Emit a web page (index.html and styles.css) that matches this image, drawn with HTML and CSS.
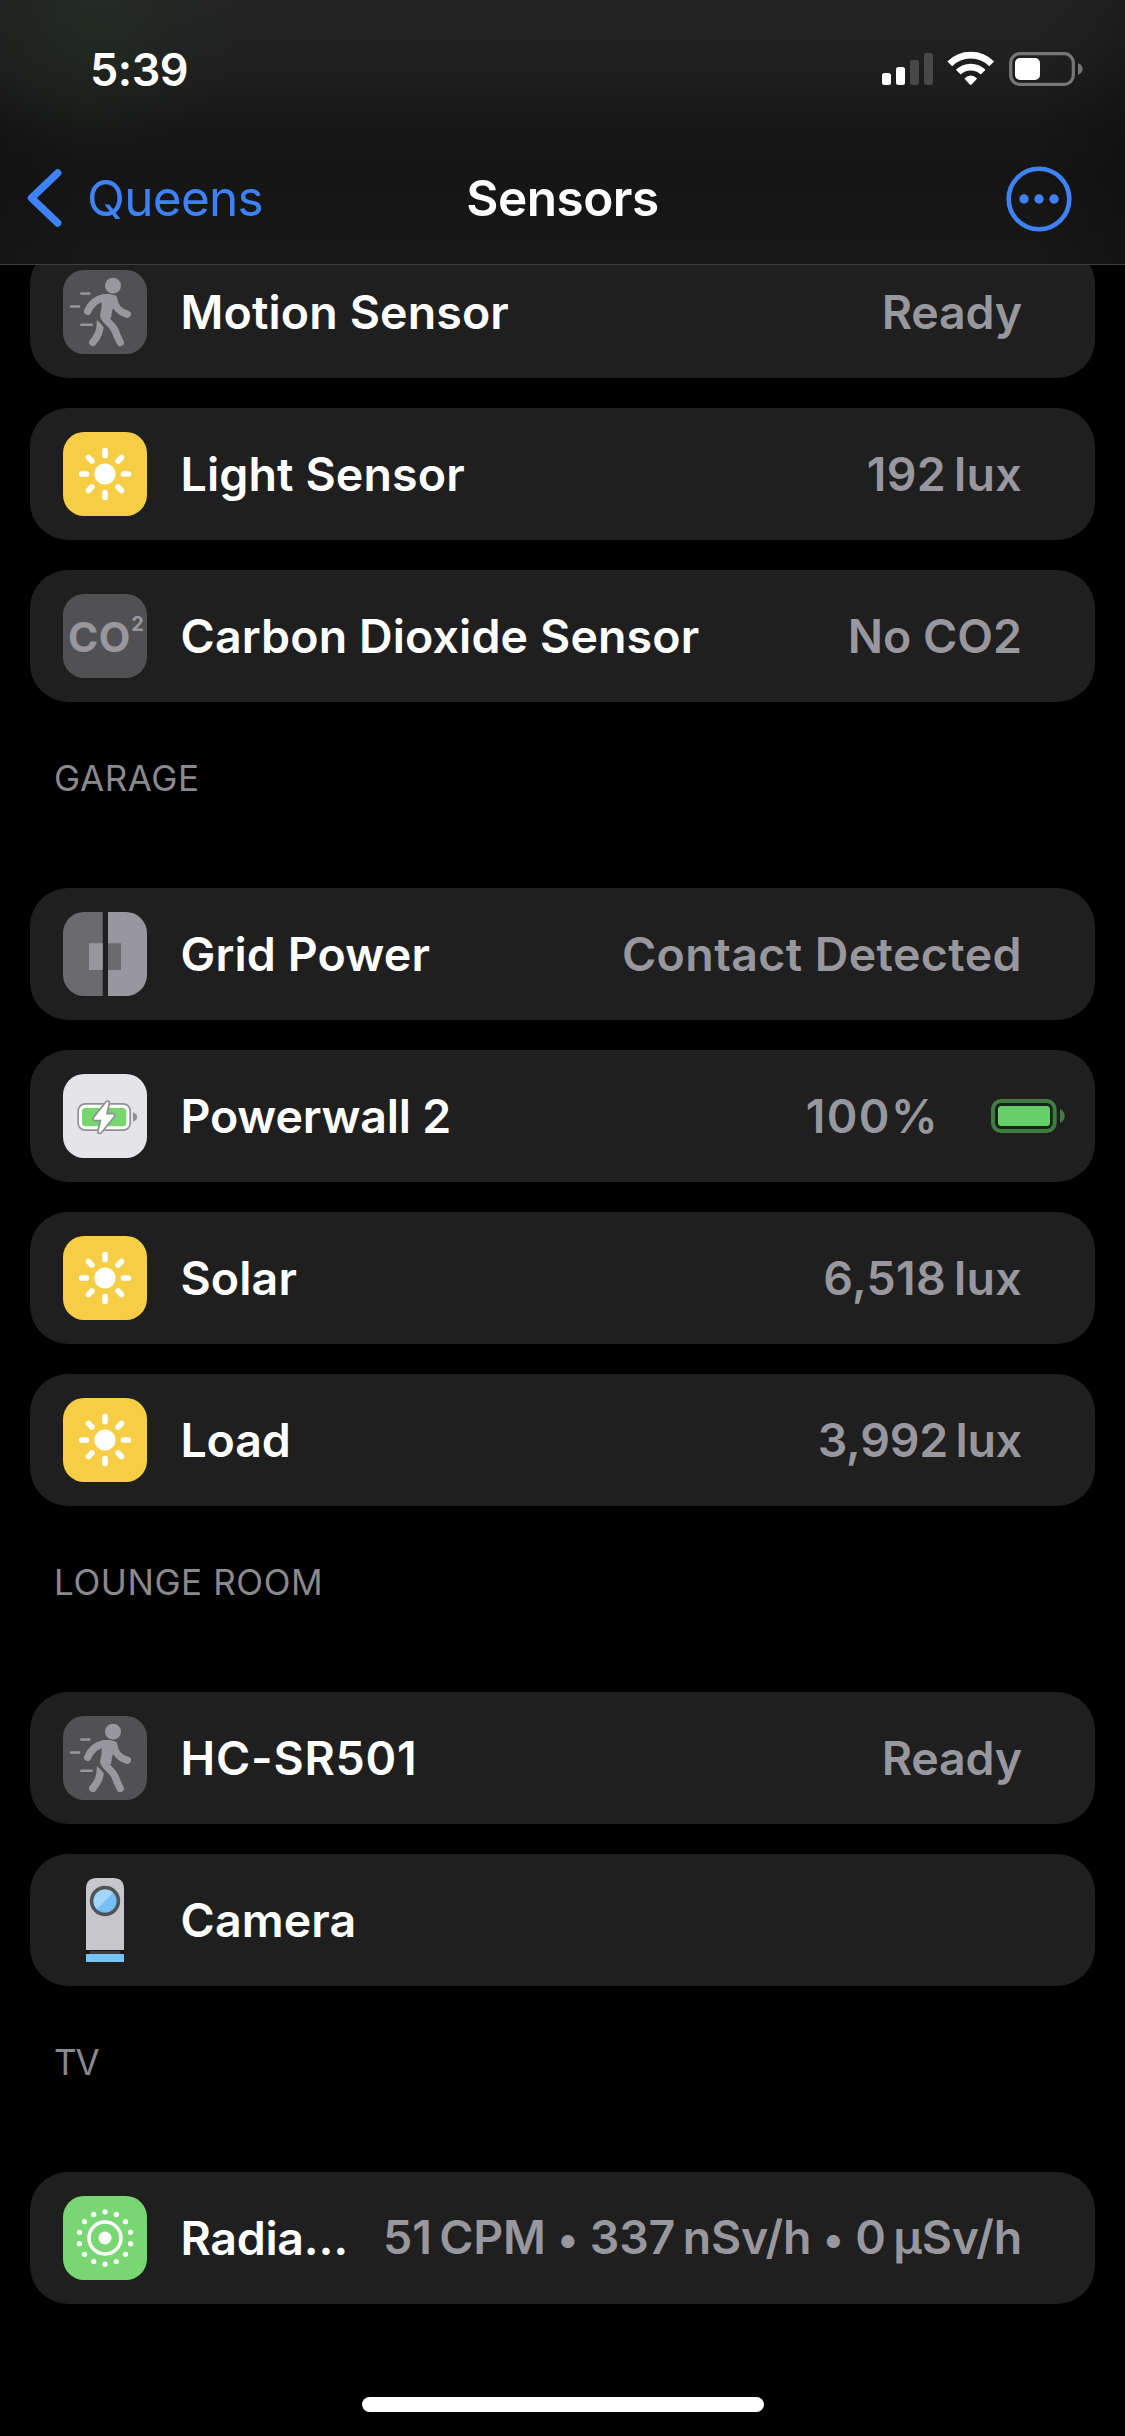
FILE: index.html
```
<!DOCTYPE html>
<html lang="en">
<head>
<meta charset="utf-8">
<title>Sensors</title>
<link rel="stylesheet" href="styles.css">
</head>
<body>
<svg class="defs" aria-hidden="true">
  <symbol id="sun" viewBox="0 0 84 84">
    <circle cx="42" cy="42" r="10.6" fill="#fff"/>
    <g stroke="#fff" stroke-width="5.7" stroke-linecap="round">
      <path d="M42 18.7v4.7M42 60.6v4.7M18.7 42h4.7M60.6 42h4.7M25.5 25.5l3.4 3.4M55.1 55.1l3.4 3.4M25.5 58.5l3.4-3.4M55.1 28.9l3.4-3.4"/>
    </g>
  </symbol>
  <symbol id="walk" viewBox="0 0 84 84">
    <path d="M37.4 52C37.500 62 34.500 66.500 29.800 72.400" fill="none" stroke="#98979d" stroke-width="7.400" stroke-linecap="round"/>
    <path d="M35 45L41 50.500L48 58.500L52 70" fill="none" stroke="#515053" stroke-width="9"/>
    <g fill="none" stroke="#98979d" stroke-width="7.400" stroke-linecap="round" stroke-linejoin="round">
      <path d="M24.700 41.300C28 33.500 32.500 29.300 40.500 28"/>
      <path d="M50.700 29C52 37 55.500 41.500 64.300 44.200"/>
      <path d="M41 46.500C43 51.500 49 54 52 60.500Q54 66 57.200 72.400"/>
    </g>
    <path d="M36 25.700C41 23.500 47 23.500 51 25.200Q54.500 27.500 53.900 32.500L50.500 36.500Q48.500 42 48.100 48L40.500 50.500Q36.500 48 37.400 43Q39 38 38.700 31Z" fill="#98979d"/>
    <circle cx="50" cy="15.700" r="8" fill="#98979d"/>
    <path d="M18.300 23.400h8M8 36.400h8M18.300 54.800h10.500" stroke="#98979d" stroke-width="2.500" stroke-linecap="round"/>
  </symbol>
</svg>

<header class="header">
  <div class="status">
    <span class="time">5:39</span>
    <svg class="status-icons" width="202" height="36" viewBox="0 0 202 36">
      <rect x="0" y="22" width="9" height="12" rx="2.500" fill="#fff"/>
      <rect x="14" y="16" width="9" height="18" rx="2.500" fill="#fff"/>
      <rect x="28" y="9" width="9" height="25" rx="2.500" fill="#484848"/>
      <rect x="42" y="2" width="9" height="32" rx="2.500" fill="#484848"/>
      <g fill="none" stroke="#fff" stroke-width="6.800">
        <path d="M67.800 12.800A29.500 29.500 0 0 1 109.700 12.800"/>
        <path d="M76.300 21.200A17.700 17.700 0 0 1 101.200 21.200"/>
      </g>
      <path d="M82.400 27.400Q88.750 21.800 95.100 27.400L89.700 33.400Q88.750 34.200 87.800 33.400Z" fill="#fff"/>
      <rect x="128.700" y="2.700" width="62.600" height="30.600" rx="9" fill="none" stroke="#767676" stroke-width="3.200"/>
      <rect x="133" y="7" width="25" height="22" rx="5" fill="#fff"/>
      <path d="M196 12.200C199.300 13.500 200.600 15.500 200.600 18S199.300 22.500 196 23.800Z" fill="#767676"/>
    </svg>
  </div>
  <nav class="nav">
    <a class="back">
      <svg width="36" height="60" viewBox="0 0 36 60"><path d="M30.700 5L4.500 30L30.700 55" fill="none" stroke="#3f82f6" stroke-width="7.400" stroke-linecap="round" stroke-linejoin="round"/></svg>
      <span>Queens</span>
    </a>
    <h1 class="heading">Sensors</h1>
    <svg class="more" width="66" height="66" viewBox="0 0 66 66">
      <circle cx="33" cy="33" r="30.300" fill="none" stroke="#3f82f6" stroke-width="4.600"/>
      <g fill="#3f82f6"><circle cx="18" cy="33" r="4.700"/><circle cx="33" cy="33" r="4.700"/><circle cx="48" cy="33" r="4.700"/></g>
    </svg>
  </nav>
</header>

<main>
  <section class="list first">
    <div class="card"><svg class="icon grey"><use href="#walk"/></svg><span class="name">Motion Sensor</span><span class="value tight">Ready</span></div>
    <div class="card"><svg class="icon yellow"><use href="#sun"/></svg><span class="name">Light Sensor</span><span class="value loose">192&#8201;lux</span></div>
    <div class="card">
      <svg class="icon grey" viewBox="0 0 84 84"><text class="co" x="4.900" y="58">CO</text><text class="sup" x="68.300" y="37">2</text></svg>
      <span class="name">Carbon Dioxide Sensor</span><span class="value">No CO2</span>
    </div>
  </section>

  <h2 class="title">GARAGE</h2>
  <section class="list">
    <div class="card">
      <svg class="icon" viewBox="0 0 84 84">
        <path d="M0 0h39.700v84H0z" fill="#6b6a6f"/><path d="M45 0h39v84H45z" fill="#98979d"/>
        <path d="M26 31.300h13.700V58H26z" fill="#98979d"/><path d="M45 31.300h13V58H45z" fill="#6b6a6f"/>
      </svg>
      <span class="name">Grid Power</span><span class="value wide">Contact Detected</span>
    </div>
    <div class="card with-battery">
      <svg class="icon light" viewBox="0 0 84 84">
        <rect x="15.200" y="29.800" width="52" height="26.400" rx="7" fill="#fff" stroke="#919095" stroke-width="1.700"/>
        <rect x="19" y="34" width="44.300" height="18.300" rx="3.500" fill="#78d66f"/>
        <path d="M70 38.300C73 39.500 74.200 41 74.200 43S73 46.500 70 47.700Z" fill="#919095"/>
        <path d="M44.500 29L32 44.600H40L36.800 57.500L49.800 41.500H41.500Z" fill="#919095" stroke="#919095" stroke-width="5.600" stroke-linejoin="round"/>
        <path d="M44.500 29L32 44.600H40L36.800 57.500L49.800 41.500H41.500Z" fill="#fff" stroke="#fff" stroke-width="2.200" stroke-linejoin="round"/>
      </svg>
      <span class="name tight">Powerwall 2</span><span class="value percent">100%</span>
      <svg class="battery" width="74" height="34" viewBox="0 0 74 34">
        <rect x="2" y="2" width="61.700" height="30" rx="8" fill="#142614" stroke="#427a43" stroke-width="4"/>
        <rect x="7" y="7" width="52" height="20" rx="3.500" fill="#68ce67"/>
        <path d="M69 10C72 11.500 73.800 14 73.800 17S72 22.500 69 24Z" fill="#427a43"/>
      </svg>
    </div>
    <div class="card"><svg class="icon yellow"><use href="#sun"/></svg><span class="name">Solar</span><span class="value loose">6,518&#8201;lux</span></div>
    <div class="card"><svg class="icon yellow"><use href="#sun"/></svg><span class="name tight">Load</span><span class="value tight">3,992&#8201;lux</span></div>
  </section>

  <h2 class="title">LOUNGE ROOM</h2>
  <section class="list">
    <div class="card"><svg class="icon grey"><use href="#walk"/></svg><span class="name model">HC-SR501</span><span class="value tight">Ready</span></div>
    <div class="card">
      <svg class="icon square" viewBox="0 0 84 84">
        <path d="M23 72V11Q23 0 34 0H50Q61 0 61 11V72Z" fill="#c7c6cb"/>
        <circle cx="42" cy="23" r="15.200" fill="#515457"/>
        <circle cx="42" cy="23" r="11.600" fill="#74c0f6"/>
        <path d="M33.800 31.200A11.600 11.600 0 0 1 50.200 14.800Z" fill="#a6d5fa"/>
        <path d="M23 72h38v4H23z" fill="#151515"/><path d="M26.500 73h31v3h-31z" fill="#3d3d3f"/>
        <path d="M23 76h38v8H23z" fill="#76c4f6"/>
      </svg>
      <span class="name">Camera</span>
    </div>
  </section>

  <h2 class="title short">TV</h2>
  <section class="list">
    <div class="card">
      <svg class="icon green" viewBox="0 0 84 84">
        <circle cx="42" cy="42" r="6.500" fill="#fff"/>
        <circle cx="42" cy="42" r="16" fill="none" stroke="#fff" stroke-width="3.500"/>
        <circle cx="42" cy="42" r="26.200" fill="none" stroke="#fff" stroke-width="5.300" stroke-linecap="round" pathLength="14" stroke-dasharray="0 1" transform="rotate(-90 42 42)"/>
      </svg>
      <span class="name cut">Radia…</span><span class="value readings">51&#8201;CPM <span class="dot">•</span> 337&#8201;nSv/h <span class="dot">•</span> 0&#8201;µSv/h</span>
    </div>
  </section>
</main>
<footer class="footer"><div class="home"></div></footer>
</body>
</html>
```
FILE: styles.css
```
* { box-sizing: border-box; }
body {
  margin: 0;
  width: 1125px;
  height: 2436px;
  overflow: hidden;
  display: flex;
  flex-direction: column;
  background: #000;
  color: #fff;
  font-family: Inter, "Liberation Sans", sans-serif;
  font-weight: 600;
}
.defs { display: none; }
svg { display: block; flex: none; }

.header {
  position: relative;
  z-index: 1;
  flex: none;
  height: 265px;
  border-bottom: 1px solid #3e3e3f;
  background:
    radial-gradient(ellipse 150px 130px at 90px 25px, rgba(35, 55, 33, .4), transparent),
    linear-gradient(90deg, rgba(0, 0, 0, .12), transparent 8%, transparent 92%, rgba(0, 0, 0, .2)),
    linear-gradient(#242425, #202021 55px, #171717 125px, #151515 175px, #181818);
}
.status {
  display: flex;
  justify-content: space-between;
  padding: 42px 41px 0 90px;
  height: 132px;
}
.time { font-size: 45px; line-height: 55px; letter-spacing: -.5px; }
.status-icons { margin-top: 9px; }
.nav {
  display: grid;
  grid-template-columns: 1fr auto 1fr;
  align-items: center;
  height: 132px;
  padding: 0 27px;
  font-size: 49.5px;
  line-height: 60px;
}
.back {
  display: flex;
  align-items: center;
  gap: 24px;
  color: #3f82f6;
  font-weight: 400;
  letter-spacing: -.7px;
}
.heading { margin: 0; font-size: inherit; font-weight: 600; letter-spacing: -.5px; }
.more { justify-self: end; margin-right: 26.500px; margin-top: 1px; }

.list { display: flex; flex-direction: column; gap: 30px; padding: 0 30px; }
.list.first { margin-top: -19px; }
.card {
  display: flex;
  align-items: center;
  height: 132px;
  padding: 0 73px 0 33px;
  border-radius: 38px;
  background: #1f1f1f;
  font-size: 46.5px;
  line-height: 132px;
  white-space: nowrap;
}
.icon { width: 84px; height: 84px; border-radius: 21px; margin-right: 33.5px; }
.grey { background: #515053; }
.yellow { background: #f5ce46; }
.light { background: #e5e4e9; }
.green { background: #78d772; }
.square { border-radius: 0; }
.name { letter-spacing: .13px; }
.value { margin-left: auto; color: #98979d; }
.tight { letter-spacing: -.2px; }
.loose { letter-spacing: .28px; }
.model { letter-spacing: .78px; }
.cut { letter-spacing: -.3px; }
.wide { letter-spacing: .4px; }
.percent { letter-spacing: 1.4px; }
.readings { letter-spacing: -.18px; }
.dot { font-size: 42px; }
.with-battery { padding-right: 30px; }
.battery { margin-left: 52px; }
.co { font-size: 41px; font-weight: 700; letter-spacing: .6px; fill: #98979d; }
.sup { font-size: 20px; font-weight: 700; fill: #98979d; }

.title {
  margin: 0;
  height: 186px;
  padding: 52px 54px 0;
  color: #8a898e;
  font-size: 35px;
  font-weight: 400;
  line-height: 49px;
  letter-spacing: .6px;
}
.short { letter-spacing: -1px; }
.footer { display: flex; justify-content: center; padding: 93px 0 0 1px; }
.home { width: 402px; height: 15px; border-radius: 8px; background: #fff; }
```
